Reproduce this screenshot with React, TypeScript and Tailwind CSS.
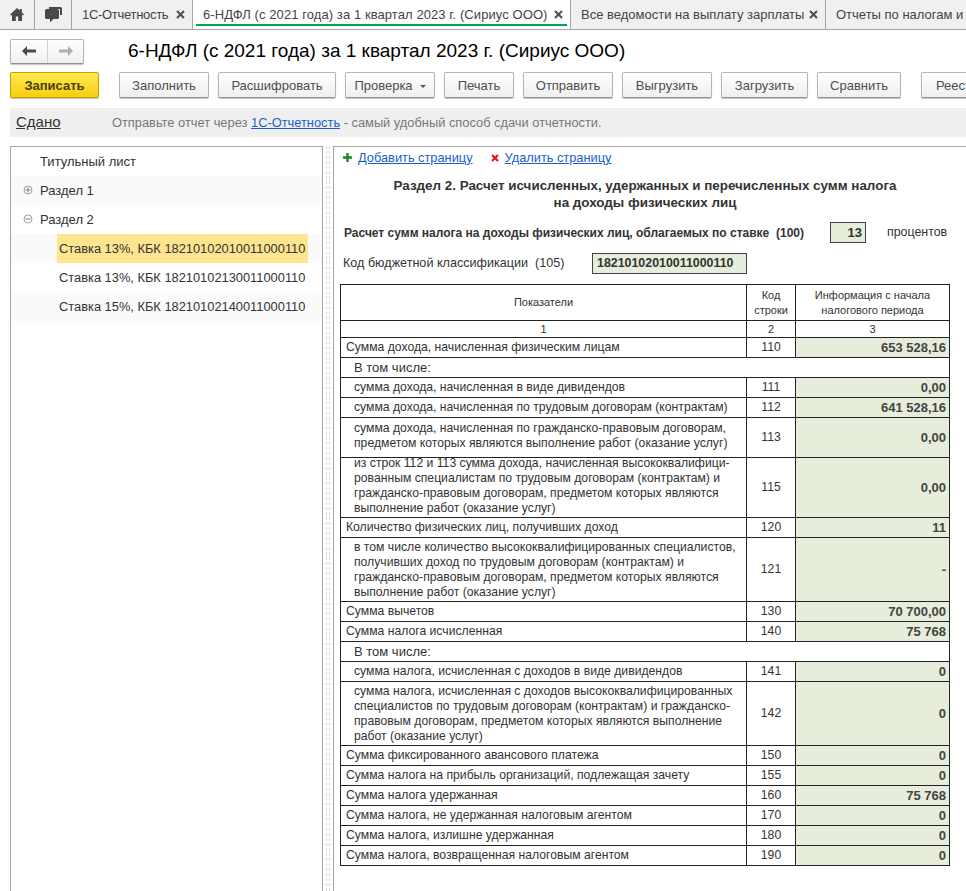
// Форма регламентированного отчета 6-НДФЛ
const TOOLBAR = [
  { label: 'Заполнить', width: 'w-[90px]' },
  { label: 'Расшифровать', width: 'w-[118px]' },
  { label: 'Проверка', width: 'w-[90px]', menu: true },
  { label: 'Печать', width: 'w-[70px]' },
  { label: 'Отправить', width: 'w-[90px]' },
  { label: 'Выгрузить', width: 'w-[90px]' },
  { label: 'Загрузить', width: 'w-[87px]' },
  { label: 'Сравнить', width: 'w-[84px]' },
];

type Row = { text: string; code?: string; value?: string; sub?: boolean; lift?: boolean; h: string };

const ROWS: Row[] = [
  { text: 'Сумма дохода, начисленная физическим лицам', code: '110', value: '653 528,16', h: 'h-[20px]' },
  { text: 'В том числе:', sub: true, h: 'h-[20px]' },
  { text: 'сумма дохода, начисленная в виде дивидендов', code: '111', value: '0,00', sub: true, h: 'h-[20px]' },
  { text: 'сумма дохода, начисленная по трудовым договорам (контрактам)', code: '112', value: '641 528,16', sub: true, h: 'h-[20px]' },
  { text: 'сумма дохода, начисленная по гражданско-правовым договорам,\nпредметом которых являются выполнение работ (оказание услуг)', code: '113', value: '0,00', sub: true, lift: true, h: 'h-[40px]' },
  { text: 'из строк 112 и 113 сумма дохода, начисленная высококвалифици-\nрованным специалистам по трудовым договорам (контрактам) и\nгражданско-правовым договорам, предметом которых являются\nвыполнение работ (оказание услуг)', code: '115', value: '0,00', sub: true, lift: true, h: 'h-[60px]' },
  { text: 'Количество физических лиц, получивших доход', code: '120', value: '11', h: 'h-[20px]' },
  { text: 'в том числе количество высококвалифицированных специалистов,\nполучивших доход по трудовым договорам (контрактам) и\nгражданско-правовым договорам, предметом которых являются\nвыполнение работ (оказание услуг)', code: '121', value: '-', sub: true, h: 'h-[64px]' },
  { text: 'Сумма вычетов', code: '130', value: '70 700,00', h: 'h-[20px]' },
  { text: 'Сумма налога исчисленная', code: '140', value: '75 768', h: 'h-[20px]' },
  { text: 'В том числе:', sub: true, h: 'h-[20px]' },
  { text: 'сумма налога, исчисленная с доходов в виде дивидендов', code: '141', value: '0', sub: true, h: 'h-[20px]' },
  { text: 'сумма налога, исчисленная с доходов высококвалифицированных\nспециалистов по трудовым договорам (контрактам) и гражданско-\nправовым договорам, предметом которых являются выполнение\nработ (оказание услуг)', code: '142', value: '0', sub: true, h: 'h-[64px]' },
  { text: 'Сумма фиксированного авансового платежа', code: '150', value: '0', h: 'h-[20px]' },
  { text: 'Сумма налога на прибыль организаций, подлежащая зачету', code: '155', value: '0', h: 'h-[20px]' },
  { text: 'Сумма налога удержанная', code: '160', value: '75 768', h: 'h-[20px]' },
  { text: 'Сумма налога, не удержанная налоговым агентом', code: '170', value: '0', h: 'h-[20px]' },
  { text: 'Сумма налога, излишне удержанная', code: '180', value: '0', h: 'h-[20px]' },
  { text: 'Сумма налога, возвращенная налоговым агентом', code: '190', value: '0', h: 'h-[20px]' },
];

const TREE = [
  { label: 'Титульный лист' },
  { label: 'Раздел 1', icon: 'plus', odd: true },
  { label: 'Раздел 2', icon: 'minus' },
  { label: 'Ставка 13%, КБК 18210102010011000110', child: true, odd: true, active: true },
  { label: 'Ставка 13%, КБК 18210102130011000110', child: true },
  { label: 'Ставка 15%, КБК 18210102140011000110', child: true, odd: true },
];

function CloseMark() {
  return (
    <svg width="9" height="9" viewBox="0 0 9 9" className="shrink-0">
      <path d="M1 1l7 7M8 1L1 8" stroke="#4d4d4d" strokeWidth="2" />
    </svg>
  );
}

function Tab({ label, width, active, clip, tracking = '' }: { label: string; width: string; active?: boolean; clip?: boolean; tracking?: string }) {
  return (
    <div className={`relative flex h-full shrink-0 items-center border-r border-[#a6a6a6] pl-[10px] ${width} ${active ? 'bg-white' : ''}`}>
      <span className={`whitespace-nowrap ${tracking}`}>{label}</span>
      {!clip && <span className="ml-auto mr-[7px]"><CloseMark /></span>}
      {active && <div className="absolute bottom-[3px] left-[3px] right-[3px] h-[2px] bg-[#00a550]" />}
    </div>
  );
}

function ToolButton({ label, width, menu }: { label: string; width: string; menu?: boolean }) {
  return (
    <button className={`flex h-[26px] shrink-0 items-center justify-center rounded-[2px] border border-[#b5b5b5] border-b-[#8f8f8f] bg-gradient-to-b from-white to-[#efefef] pt-[1px] text-[#4d4d4d] shadow-[0_1px_1px_#c4c4c4] ${width}`}>
      {label}
      {menu && <span className="ml-[7px] mt-[1px] h-0 w-0 border-x-[3px] border-t-[3px] border-x-transparent border-t-[#555]" />}
    </button>
  );
}

function TreeIcon({ type }: { type: string }) {
  return (
    <svg width="10" height="10" viewBox="0 0 10 10" className="absolute left-[12px] top-[9px]">
      <circle cx="5" cy="5" r="4" fill="none" stroke="#a0a0a0" />
      <path d={type === 'plus' ? 'M2.5 5h5M5 2.5v5' : 'M2.5 5h5'} stroke="#808080" />
    </svg>
  );
}

export default function App() {
  return (
    <div className="flex h-[891px] w-[966px] flex-col overflow-hidden bg-white font-['Liberation_Sans',Arial,sans-serif] text-[13px] text-[#333]">
      {/* Вкладки */}
      <div className="flex h-[30px] shrink-0 overflow-hidden border-b border-[#a6a6a6] bg-[#f0f0f0] text-[#444]">
        <div className="flex h-full w-[35px] shrink-0 items-center justify-center border-r border-[#a6a6a6]">
          <svg width="14" height="13" viewBox="0 0 14 13">
            <path d="M7 0L0 6.6l1 1L2 6.7V13h3.8V8.5h2.400V13H12V6.7l1 .9 1-1L11.800 4.500V1h-2v1.600z" fill="#4a4a4a" />
          </svg>
        </div>
        <div className="flex h-full w-[37px] shrink-0 items-center justify-center border-r border-[#a6a6a6]">
          <svg width="17" height="16" viewBox="0 0 17 16">
            <path d="M1.5 2h11A1.5 1.5 0 0 1 14 3.5v7a1.5 1.5 0 0 1-1.5 1.5H8.5L5 15.500V12H1.500A1.500 1.500 0 0 1 0 10.500v-7A1.500 1.500 0 0 1 1.500 2z" fill="#4a4a4a" />
            <path d="M4 0h11.500A1.500 1.500 0 0 1 17 1.500V8h-2V2H4z" fill="#4a4a4a" />
          </svg>
        </div>
        <Tab label="1С-Отчетность" width="w-[121px]" tracking="tracking-[-0.3px]" />
        <Tab label="6-НДФЛ (с 2021 года) за 1 квартал 2023 г. (Сириус ООО)" width="w-[378px]" tracking="tracking-[0.08px]" active />
        <Tab label="Все ведомости на выплату зарплаты" width="w-[255px]" />
        <Tab label="Отчеты по налогам и взносам" width="w-[220px]" clip />
      </div>

      {/* Заголовок */}
      <div className="flex h-[42px] shrink-0 items-center pl-[10px]">
        <div className="flex h-[25px] w-[74px] items-center rounded-[2px] border border-[#b5b5b5] border-b-[#8f8f8f] bg-gradient-to-b from-white to-[#efefef] shadow-[0_1px_1px_#c4c4c4]">
          <div className="flex h-full w-[37px] items-center justify-center border-r border-[#d0d0d0]">
            <svg width="14" height="10" viewBox="0 0 14 10"><path d="M0 5l5-5v3.500h9v3H5V10z" fill="#4a4a4a" /></svg>
          </div>
          <div className="flex h-full flex-1 items-center justify-center">
            <svg width="14" height="10" viewBox="0 0 14 10"><path d="M14 5L9 0v3.500H0v3h9V10z" fill="#aeaeae" /></svg>
          </div>
        </div>
        <h1 className="ml-[44px] whitespace-nowrap text-[19px] text-black">6-НДФЛ (с 2021 года) за 1 квартал 2023 г. (Сириус ООО)</h1>
      </div>

      {/* Командная панель */}
      <div className="flex h-[36px] shrink-0 items-start overflow-hidden pl-[10px]">
        <button className="mr-[20px] flex h-[26px] w-[89px] shrink-0 items-center justify-center rounded-[2px] border border-[#c2a100] bg-gradient-to-b from-[#ffe94d] to-[#f7cf00] pt-[1px] font-bold text-[#4a4100] shadow-[0_1px_1px_#c4c4c4]">
          Записать
        </button>
        <div className="flex shrink-0 gap-[9px]">
          {TOOLBAR.map((b) => (
            <ToolButton key={b.label} {...b} />
          ))}
        </div>
        <div className="ml-[20px] shrink-0">
          <ToolButton label="Реестр" width="w-[72px]" />
        </div>
      </div>

      {/* Статус отчета */}
      <div className="ml-[10px] flex h-[29px] shrink-0 items-center bg-[#efefef] pl-[6px]">
        <span className="w-[96px] text-[15px] text-[#333] underline">Сдано</span>
        <span className="text-[12.85px] text-[#777]">
          Отправьте отчет через <span className="text-[#1a5fc8] underline">1С-Отчетность</span> - самый удобный способ сдачи отчетности.
        </span>
      </div>

      <div className="mt-[9px] flex min-h-0 flex-1">
        {/* Дерево разделов */}
        <div className="ml-[10px] w-[313px] shrink-0 border-x border-t border-[#a6a6a6] text-[#333]">
          {TREE.map((item) => (
            <div key={item.label} className={`relative flex h-[29px] items-center ${item.odd ? 'bg-[#fafafa]' : ''}`}>
              {item.icon && <TreeIcon type={item.icon} />}
              {item.child ? (
                <div className={`ml-[46px] flex h-full w-[251px] items-center whitespace-nowrap pl-[2px] text-[12.85px] ${item.active ? 'bg-[#fde48e]' : ''}`}>{item.label}</div>
              ) : (
                <span className="ml-[29px]">{item.label}</span>
              )}
            </div>
          ))}
        </div>

        {/* Разделитель */}
        <div className="mx-[3px] w-[4px] shrink-0 border-x border-dashed border-[#d8d8d8]" />

        {/* Форма */}
        <div className="min-w-0 flex-1 border-l border-t border-[#a6a6a6] pl-[6px]">
          <div className="flex h-[21px] items-center pl-[3px] text-[12.8px]">
            <svg width="9" height="9" viewBox="0 0 9 9"><path d="M3.300 0h2.400v3.300H9v2.400H5.700V9H3.300V5.700H0V3.300h3.300z" fill="#1e8a1e" /></svg>
            <span className="ml-[6px] text-[#1a5fc8] underline">Добавить страницу</span>
            <svg width="8" height="8" viewBox="0 0 8 8" className="ml-[18px]"><path d="M1 1l6 6M7 1L1 7" stroke="#e01010" strokeWidth="2" /></svg>
            <span className="ml-[6px] text-[#1a5fc8] underline">Удалить страницу</span>
          </div>

          <div className="mt-[9px] w-[610px] text-center text-[13.4px] font-bold leading-[17px] text-[#333]">
            Раздел 2. Расчет исчисленных, удержанных и перечисленных сумм налога<br />на доходы физических лиц
          </div>

          <div className="mt-[11px] flex h-[21px] items-center pl-[4px]">
            <span className="w-[486px] whitespace-nowrap text-[12px] font-bold">Расчет сумм налога на доходы физических лиц, облагаемых по ставке&nbsp;&nbsp;(100)</span>
            <div className="flex h-[21px] w-[36px] items-center justify-end border border-[#444] bg-[#e6edda] pr-[3px] font-bold">13</div>
            <span className="ml-[21px] text-[12.4px]">процентов</span>
          </div>

          <div className="mt-[10px] flex h-[21px] items-center pl-[3px]">
            <span className="w-[249px] whitespace-nowrap text-[12.6px]">Код бюджетной классификации&nbsp;&nbsp;(105)</span>
            <div className="flex h-[21px] w-[155px] items-center border border-[#444] bg-[#e6edda] pl-[4px] text-[12.4px] font-bold">18210102010011000110</div>
          </div>

          <table className="mt-[10px] w-[609px] table-fixed border-collapse text-[12.2px] leading-[15px] text-[#333]">
            <colgroup>
              <col className="w-[406px]" />
              <col className="w-[49px]" />
              <col className="w-[154px]" />
            </colgroup>
            <thead className="text-[11px] font-normal">
              <tr className="h-[36px]">
                <th className="border border-[#222] font-normal">Показатели</th>
                <th className="border border-[#222] font-normal">Код<br />строки</th>
                <th className="border border-[#222] font-normal">Информация с начала<br />налогового периода</th>
              </tr>
              <tr className="h-[17px]">
                <th className="border border-[#222] font-normal">1</th>
                <th className="border border-[#222] font-normal">2</th>
                <th className="border border-[#222] font-normal">3</th>
              </tr>
            </thead>
            <tbody>
              {ROWS.map((r, i) =>
                r.code ? (
                  <tr key={i} className={r.h}>
                    <td className={`whitespace-pre border border-[#222] ${r.sub ? 'pl-[13px]' : 'pl-[5px]'}`}>
                      <div className={r.lift ? '-mt-[4px]' : ''}>{r.text}</div>
                    </td>
                    <td className="border border-[#222] text-center">{r.code}</td>
                    <td className="border border-[#222] bg-[#e6edda] pr-[3px] text-right text-[13px] font-bold text-[#444]">{r.value}</td>
                  </tr>
                ) : (
                  <tr key={i} className={r.h}>
                    <td colSpan={3} className="border border-[#222] pl-[13px] text-[13px]">{r.text}</td>
                  </tr>
                ),
              )}
            </tbody>
          </table>
        </div>
      </div>
    </div>
  );
}
